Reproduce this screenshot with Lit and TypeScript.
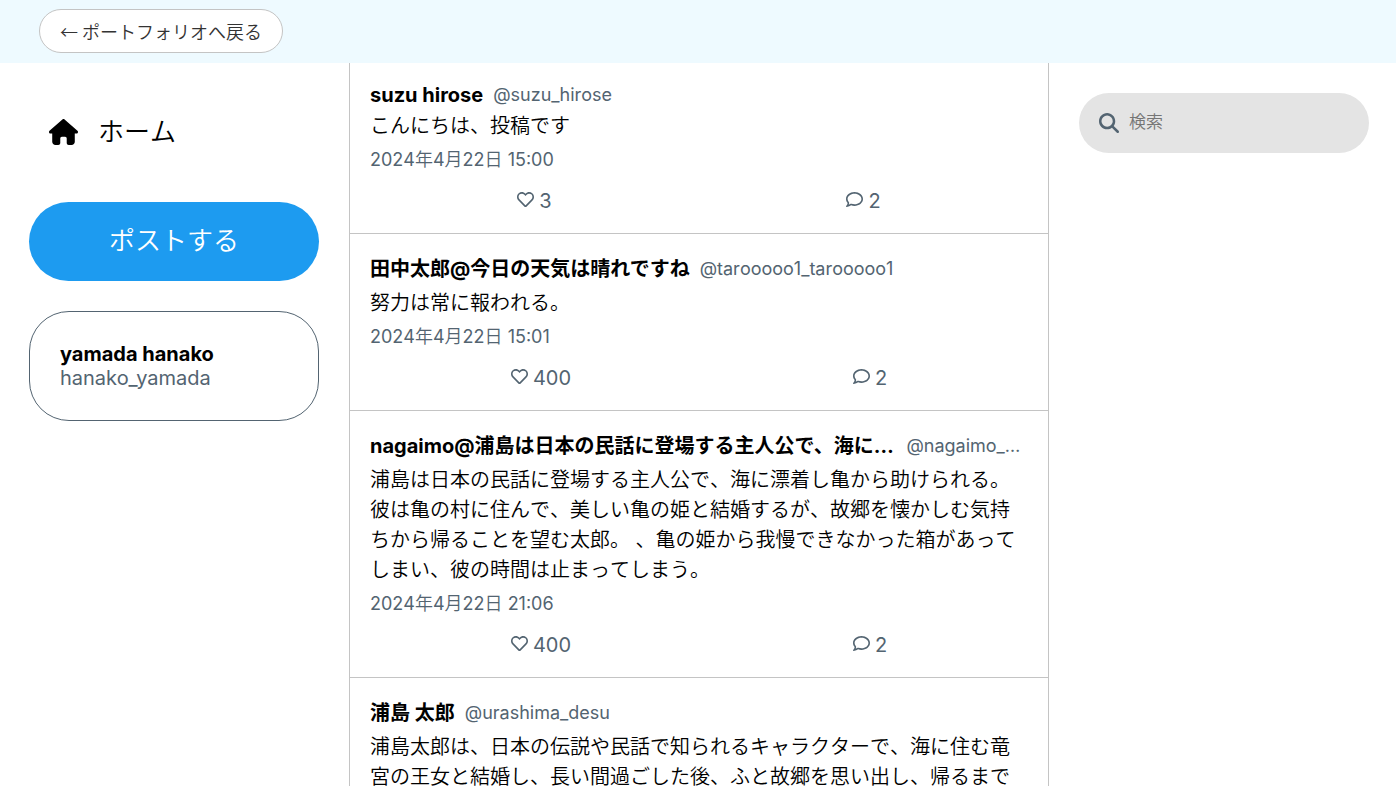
import { LitElement, html, css, svg } from "lit";
import { customElement, property } from "lit/decorators.js";
import { classMap } from "lit/directives/class-map.js";

interface Post {
  name: string;
  handle: string;
  body: string;
  date: string;
  likes: number;
  comments: number;
}

const posts: Post[] = [
  { name: "suzu hirose", handle: "@suzu_hirose", body: "こんにちは、投稿です", date: "2024年4月22日 15:00", likes: 3, comments: 2 },
  { name: "田中太郎@今日の天気は晴れですね", handle: "@tarooooo1_tarooooo1", body: "努力は常に報われる。", date: "2024年4月22日 15:01", likes: 400, comments: 2 },
  {
    name: "nagaimo@浦島は日本の民話に登場する主人公で、海に漂着し",
    handle: "@nagaimo_nagaimo",
    body: "浦島は日本の民話に登場する主人公で、海に漂着し亀から助けられる。彼は亀の村に住んで、美しい亀の姫と結婚するが、故郷を懐かしむ気持ちから帰ることを望む太郎。 、亀の姫から我慢できなかった箱があってしまい、彼の時間は止まってしまう。",
    date: "2024年4月22日 21:06", likes: 400, comments: 2,
  },
  {
    name: "浦島 太郎",
    handle: "@urashima_desu",
    body: "浦島太郎は、日本の伝説や民話で知られるキャラクターで、海に住む竜宮の王女と結婚し、長い間過ごした後、ふと故郷を思い出し、帰るまでの物語です。",
    date: "2024年4月22日 21:10", likes: 400, comments: 2,
  },
];

const icons = {
  home: svg`<path d="M575.8 255.5c0 18-15 32.100-32 32.100h-32l.7 160.200c0 35.300-28.700 64.200-64 64.200H392c-22.100 0-40-17.900-40-40v-88c0-17.700-14.300-32-32-32h-64c-17.700 0-32 14.300-32 32v88c0 22.100-17.900 40-40 40h-56c-35.300 0-64-28.700-64-64V287.600H32c-18 0-32-14-32-32.100 0-9 3-17 10-24L266.400 8c7-7 15-8 22-8s15 2 21 7l255.400 224.500c8 7 12 15 11 24z"/>`,
  heart: svg`<path d="M458.400 64.300C400.600 15.700 311.300 23 256 79.300 200.700 23 111.400 15.600 53.600 64.300-21.600 127.600-10.600 230.800 43 285.500l175.400 178.700c10 10.200 23.400 15.900 37.600 15.900 14.300 0 27.600-5.600 37.600-15.800L469 285.600c53.500-54.700 64.700-157.900-10.600-221.300zm-23.600 187.500L259.400 430.500c-2.400 2.400-4.400 2.400-6.800 0L77.200 251.800c-36.500-37.200-43.900-107.600 7.300-150.700 38.900-32.700 98.900-27.800 136.500 10.500l35 35.700 35-35.700c37.800-38.500 97.800-43.200 136.500-10.600 51.100 43.100 43.500 113.900 7.300 150.800z"/>`,
  comment: svg`<path d="M123.600 391.300c12.900-9.400 29.600-11.800 44.600-6.400 26.500 9.600 56.200 15.100 87.800 15.100 124.700 0 208-80.500 208-160S380.700 80 256 80 48 160.500 48 240c0 32 12.400 62.800 35.700 89.200 8.600 9.700 12.800 22.500 11.800 35.500-1.400 18.100-5.700 34.700-11.300 49.400 17-7.900 31.100-16.700 39.400-22.800zM21.200 431.900c1.800-2.700 3.500-5.400 5.100-8.100 10-16.600 19.500-38.400 21.400-62.900C17.700 326.800 0 285.100 0 240 0 125.100 114.600 32 256 32s256 93.100 256 208-114.600 208-256 208c-37.100 0-72.300-6.400-104.100-17.900-11.900 8.700-31.300 20.600-54.300 30.600-15.100 6.600-32.300 12.600-50.100 16.100-.8.200-1.600.3-2.400.500-4.400.8-8.700 1.500-13.200 1.900-.2 0-.5.100-.7.100-5.100.5-10.200.8-15.300.8-6.500 0-12.300-3.900-14.800-9.900s-1.100-12.800 3.400-17.400c4.100-4.200 7.800-8.700 11.300-13.500 1.700-2.300 3.300-4.600 4.800-6.900z"/>`,
  search: svg`<path d="M416 208c0 45.900-14.900 88.300-40 122.700l126.600 126.700c12.500 12.500 12.500 32.800 0 45.300s-32.800 12.500-45.300 0L330.700 376c-34.400 25.200-76.800 40-122.700 40C93.100 416 0 322.900 0 208S93.100 0 208 0s208 93.100 208 208zM208 352a144 144 0 1 0 0-288 144 144 0 1 0 0 288z"/>`,
};

const hasJapanese = (text: string) => /[\u3040-\u30ff\u4e00-\u9fff]/.test(text);

@customElement("post-card")
class PostCard extends LitElement {
  @property({ attribute: false }) post!: Post;

  static styles = css`
    :host { display: block; border-bottom: 1px solid #c4c4c4; padding: 20px 20px 19px; font-kerning: none; }
    .author { display: flex; align-items: center; gap: 10px; margin-bottom: 4px; }
    .name { max-width: 80%; flex-shrink: 0; font-size: 20px; font-weight: 700; line-height: 24px; font-kerning: normal; }
    .name.tall { line-height: 30px; }
    .name, .handle { margin: 0; white-space: nowrap; overflow: hidden; text-overflow: ellipsis; }
    .handle { min-width: 0; font-size: 18px; line-height: 22px; color: #536471; }
    .body { margin: 0 0 5px; font-size: 20px; font-weight: 350; line-height: 30px; }
    .date { display: block; font-size: 18px; line-height: 28px; color: #536471; }
    .cjk { font-weight: 350; }
    .stats { display: flex; justify-content: space-around; margin-top: 15px; }
    .stat { display: flex; align-items: baseline; gap: 5px; padding: 0; border: 0; background: none;
      font: inherit; font-size: 20px; line-height: 25px; color: #536471; cursor: pointer; }
    .icon { width: 17px; height: 17px; fill: currentColor; }
  `;

  render() {
    const p = this.post;
    return html`
      <div class="author">
        <h2 class=${classMap({ name: true, tall: hasJapanese(p.name) })}>${p.name}</h2>
        <span class="handle">${p.handle}</span>
      </div>
      <p class="body">${p.body}</p>
      <time class="date">${p.date.split(/([年月日])/).map((s) => (hasJapanese(s) ? html`<span class="cjk">${s}</span>` : s))}</time>
      <div class="stats">
        <button class="stat" aria-label="いいね"><svg class="icon" viewBox="0 0 512 512">${icons.heart}</svg>${p.likes}</button>
        <button class="stat" aria-label="コメント"><svg class="icon" viewBox="0 0 512 512">${icons.comment}</svg>${p.comments}</button>
      </div>
    `;
  }
}

@customElement("app-root")
class AppRoot extends LitElement {
  static styles = css`
    :host { display: flex; flex-direction: column; height: 100vh; overflow: hidden; background: #fff; color: #000;
      font-family: Inter, "Noto Sans CJK JP", sans-serif; }
    .top { flex: none; display: flex; padding: 9px 39px 10px; background: #eefaff; }
    .back { padding: 6px 20px; border: 1px solid #c4c4c4; border-radius: 22px; background: #fff; color: #333;
      font-family: "Noto Sans CJK JP", sans-serif; font-size: 18px; font-weight: 350; line-height: 30px;
      font-kerning: none; text-decoration: none; }
    .layout { flex: 1; min-height: 0; display: grid; grid-template-columns: 25% minmax(0, 700px) minmax(0, 1fr); }
    .side { display: flex; flex-direction: column; align-items: flex-end; padding: 30px 30px 30px 0; }
    .side > * { box-sizing: border-box; width: 100%; max-width: 290px; }
    .home { display: flex; align-items: center; gap: 20px; padding: 20px; color: #000; font-size: 26px; font-weight: 350;
      line-height: 38px; text-decoration: none; font-kerning: none; }
    .home-icon { width: 29px; height: 26px; }
    .submit { margin: 31px 0 30px; padding: 19px 20px 20px; border: 0; border-radius: 40px; background: #1d9bf0; color: #fff;
      font: inherit; font-size: 26px; font-weight: 350; line-height: 40px; cursor: pointer; font-kerning: none; }
    .user { padding: 30px; border: 1px solid #536471; border-radius: 40px; font-size: 20px; line-height: 24px; }
    .user-name, .user-id { margin: 0; }
    .user-name { font-weight: 700; }
    .user-id { color: #536471; }
    .feed { border: solid #c4c4c4; border-width: 0 1px; overflow: hidden; }
    .aside { padding: 30px 27px 30px 30px; }
    .search { display: flex; align-items: center; gap: 10px; box-sizing: border-box; max-width: 290px; padding: 15px 20px;
      border-radius: 30px; background: #e4e4e4; color: #536471; }
    .search-icon { flex: none; width: 20px; height: 20px; }
    .query { flex: 1; min-width: 0; height: 30px; padding: 0 0 2px; box-sizing: border-box; border: 0; outline: 0;
      background: none; font: inherit; font-size: 17px; font-weight: 350; }
    .query::placeholder { color: #757575; }
    svg { fill: currentColor; }
  `;

  render() {
    return html`
      <header class="top"><a class="back" href="#">← ポートフォリオへ戻る</a></header>
      <div class="layout">
        <nav class="side">
          <a class="home" href="#"><svg class="home-icon" viewBox="0 0 576 512">${icons.home}</svg>ホーム</a>
          <button class="submit">ポストする</button>
          <div class="user">
            <p class="user-name">yamada hanako</p>
            <p class="user-id">hanako_yamada</p>
          </div>
        </nav>
        <main class="feed">${posts.map((p) => html`<post-card .post=${p}></post-card>`)}</main>
        <aside class="aside">
          <label class="search">
            <svg class="search-icon" viewBox="0 0 512 512">${icons.search}</svg>
            <input class="query" type="search" placeholder="検索" aria-label="検索" />
          </label>
        </aside>
      </div>
    `;
  }
}
